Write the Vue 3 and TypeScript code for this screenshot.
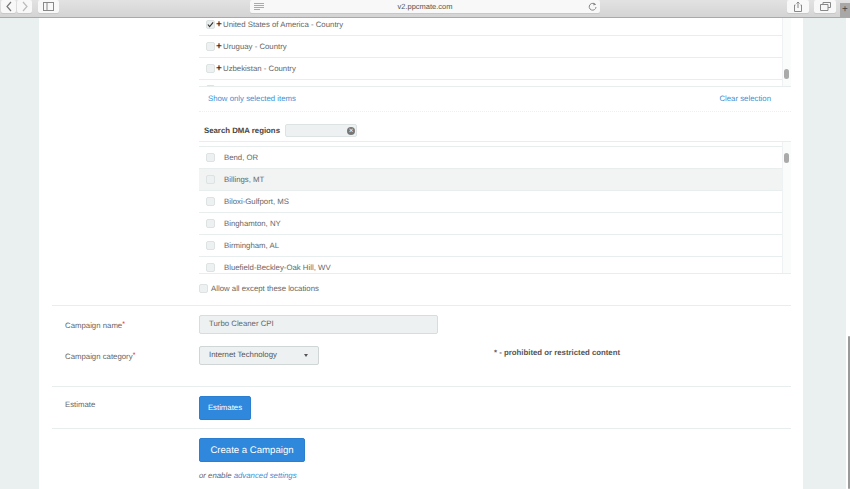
<script setup lang="ts">
const countries = ['United States of America', 'Uruguay', 'Uzbekistan']
const regions = ['Bend, OR', 'Billings, MT', 'Biloxi-Gulfport, MS', 'Binghamton, NY', 'Birmingham, AL', 'Bluefield-Beckley-Oak Hill, WV']
</script>

<template>
  <div class="window">
    <header class="toolbar">
      <div class="btn-pair">
        <button class="tool nav"><svg width="8" height="11" viewBox="0 0 8 11"><path d="M6 1 2 5.500 6 10" fill="none" stroke="#777" stroke-width="1.200"/></svg></button>
        <button class="tool nav"><svg width="8" height="11" viewBox="0 0 8 11"><path d="M2 1 6 5.500 2 10" fill="none" stroke="#bbb" stroke-width="1.200"/></svg></button>
      </div>
      <button class="tool side"><svg width="11" height="9" viewBox="0 0 11 9"><rect x=".5" y=".5" width="10" height="8" fill="none" stroke="#888"/><path d="M4 .5v8" stroke="#888"/></svg></button>
      <div class="address">
        <svg class="reader" width="10" height="7" viewBox="0 0 10 7"><path d="M0 .5h10M0 2.500h10M0 4.500h10M0 6.500h6" stroke="#aaa"/></svg>
        <span class="url">v2.ppcmate.com</span>
        <svg class="reload" width="9" height="9" viewBox="0 0 9 9"><path d="M7.500 3A3.400 3.400 0 1 0 8 5" fill="none" stroke="#888"/><path d="M5.500 .5 8 2.500 5.500 3.500z" fill="#888"/></svg>
      </div>
      <button class="tool action"><svg width="8" height="11" viewBox="0 0 8 11"><path d="M1.500 4H.5v6.500h7V4h-1M4 7V1M2.500 2.500 4 1l1.500 1.500" fill="none" stroke="#888"/></svg></button>
      <button class="tool action"><svg width="11" height="9" viewBox="0 0 11 9"><path d="M3 2.500V.5h7.500v5H8M.5 2.500h7.500v6H.5z" fill="none" stroke="#888"/></svg></button>
      <span class="plus">+</span>
    </header>

    <div class="page">
      <main class="card">
        <section class="geo">
          <div class="list top-list">
            <div class="rows">
              <div v-for="(c, i) in countries" :key="c" class="row">
                <span class="check" :class="{ on: i === 0 }"><svg v-if="i === 0" width="8" height="7" viewBox="0 0 8 7"><path d="M1 3.500 3 6l4-5" fill="none" stroke="#333" stroke-width="1.300"/></svg></span>
                <span class="add">+</span><span>{{ c }} - Country</span>
              </div>
              <div class="row"><span class="check"></span></div>
            </div>
            <div class="track"><span class="thumb thumb-low"></span></div>
          </div>
          <div class="links">
            <a>Show only selected items</a>
            <a>Clear selection</a>
          </div>
          <div class="search">
            <label>Search DMA regions</label>
            <div class="search-box"><span class="clear">×</span></div>
          </div>
          <div class="list dma-list">
            <div class="rows">
              <div class="row spacer"></div>
              <div v-for="(r, i) in regions" :key="r" class="row" :class="{ hover: i === 1 }">
                <span class="check"></span><span class="region">{{ r }}</span>
              </div>
            </div>
            <div class="track"><span class="thumb thumb-high"></span></div>
          </div>
          <div class="allow"><span class="check"></span><span>Allow all except these locations</span></div>
        </section>

        <section class="form-block campaign">
          <div class="field name-field">
            <label>Campaign name<i>*</i></label>
            <div class="input">Turbo Cleaner CPI</div>
          </div>
          <div class="field category-field">
            <label>Campaign category<i>*</i></label>
            <div class="select">Internet Technology<span class="caret"></span></div>
            <strong class="note">* - prohibited or restricted content</strong>
          </div>
        </section>

        <section class="form-block estimate">
          <label>Estimate</label>
          <button class="primary small">Estimates</button>
        </section>

        <section class="form-block create">
          <button class="primary large">Create a Campaign</button>
          <p>or enable <a>advanced settings</a></p>
        </section>
      </main>
      <aside class="page-scroll"><span></span></aside>
    </div>
  </div>
</template>

<style scoped>
.window { width: 850px; height: 489px; overflow: hidden; display: flex; flex-direction: column; background: #eaf0f0; font-family: "Liberation Sans", Arial, sans-serif; font-size: 7.800px; color: #666; text-rendering: geometricPrecision; }
.toolbar { height: 18px; flex: none; display: flex; align-items: flex-start; box-sizing: border-box; padding-left: 1px; background: linear-gradient(#e2e2e2, #d4d4d4); border-bottom: 1px solid #a9a9a9; position: relative; z-index: 1; }
.tool { height: 13px; padding: 0; border: 0; border-radius: 2px; background: #f8f8f8; display: flex; align-items: center; justify-content: center; box-shadow: 0 1px 0 #c8c8c8; }
.btn-pair { display: flex; gap: 1px; }
.nav { width: 15px; }
.side { width: 21px; margin-left: 6px; }
.address { position: relative; width: 350px; height: 13px; margin-left: 191px; margin-right: 187px; background: #f8f8f8; border-radius: 2px; box-shadow: 0 1px 0 #c8c8c8; display: flex; align-items: center; justify-content: center; }
.reader { position: absolute; left: 4px; top: 3px; }
.reload { position: absolute; right: 3px; top: 2px; }
.url { font-size: 7.500px; color: #555; }
.action { width: 22px; margin-right: 5px; }
.plus { margin-left: -1px; margin-top: 3px; width: 10px; height: 14px; background: #a8a8a8; color: #444; font-size: 10px; line-height: 13px; text-align: center; }
.page { flex: 1; display: flex; min-height: 0; padding-left: 39px; }
.card { width: 764px; background: #fff; padding: 0 12px 0 13px; box-sizing: border-box; }
.geo { padding-left: 147px; }
.list { position: relative; border-bottom: 1px solid #e8eeee; overflow: hidden; padding-right: 9px; }
.top-list { height: 68px; }
.top-list .rows { margin-top: -4px; height: 72px; }
.dma-list { height: 131px; border-top: 1px solid #e8eeee; margin-top: 1px; }
.rows { overflow: hidden; height: 100%; }
.row { height: 22px; box-sizing: border-box; border-bottom: 1px solid #e8eeee; display: flex; align-items: center; padding: 0 0 1px 7px; }
.top-list .row:last-child { border-bottom: 0; align-items: flex-start; padding-top: 5px; }
.dma-list .row { padding-bottom: 0; }
.spacer { height: 5px; padding: 0; }
.hover { background: #f2f3f3; }
.check { width: 7px; height: 7px; flex: none; border: 1px solid #dde2e2; border-radius: 2px; background: #edf1f1; margin-right: 1px; display: inline-flex; align-items: center; justify-content: center; }
.check.on { background: #e8eded; }
.add { font-weight: 700; color: #333; font-size: 10px; line-height: 10px; width: 6px; margin-right: 1px; padding-top: 2px; }
.region { margin-left: 8px; }
.track { position: absolute; top: 0; right: 0; bottom: 0; width: 9px; background: #fafbfb; border-left: 1px solid #eef2f2; box-sizing: border-box; }
.thumb { position: absolute; left: 1px; width: 5px; background: #aaa; border-radius: 3px; }
.thumb-low { top: 51px; height: 10px; }
.thumb-high { top: 11px; height: 10px; }
.links { display: flex; justify-content: space-between; padding: 7px 20px 0 9px; height: 17px; border-bottom: 1px dotted #eef0f0; line-height: 10px; }
a { color: #3f8fd2; }
.search { display: flex; align-items: center; height: 19px; margin-top: 9px; padding-left: 5px; }
.search label { font-weight: 700; color: #444; width: 81px; white-space: nowrap; }
.search-box { position: relative; width: 70px; height: 11px; border: 1px solid #dde3e3; border-radius: 2px; background: #edf1f1; }
.clear { position: absolute; right: 1px; top: 1.500px; width: 8px; height: 8px; border-radius: 50%; background: #777; color: #fff; font-size: 8px; line-height: 8px; text-align: center; }
.allow { display: flex; align-items: center; height: 20px; margin-top: 4px; }
.allow .check { margin-right: 3px; }
.form-block { border-top: 1px solid #e8eeee; }
.campaign { height: 81px; margin-top: 7px; box-sizing: border-box; padding-top: 9px; }
.field { display: flex; align-items: center; }
.field label { width: 147px; padding-left: 13px; box-sizing: border-box; padding-top: 1px; }
.field i { color: #e02020; font-style: normal; vertical-align: 2px; font-size: 7px; }
.input { width: 239px; height: 19px; box-sizing: border-box; border: 1px solid #d6dddd; border-radius: 2px; background: #edf1f1; padding-left: 9px; line-height: 16px; }
.category-field { margin-top: 12px; position: relative; }
.select { position: relative; width: 120px; height: 19px; box-sizing: border-box; border: 1px solid #d0d6d6; border-radius: 2px; background: #edf1f1; padding-left: 9px; line-height: 16px; color: #555; }
.caret { position: absolute; right: 10px; top: 7px; border: 2.500px solid transparent; border-top: 3px solid #555; border-bottom: 0; }
.note { margin-left: 175px; color: #555; margin-top: -6px; }
.estimate { height: 42px; display: flex; align-items: center; box-sizing: border-box; }
.estimate label { width: 147px; padding-left: 13px; box-sizing: border-box; margin-top: -6px; }
.primary { display: block; padding: 0; border: 1px solid #2a7fd0; border-radius: 2px; background: #2f88dc; color: #fff; font-family: inherit; text-rendering: geometricPrecision; }
.small { width: 52px; height: 24px; font-size: 7.800px; }
.create { padding: 9px 0 0 147px; }
.large { width: 106px; height: 24px; font-size: 9.600px; }
.create p { margin: 9px 0 0; font-style: italic; line-height: 10px; }
.page-scroll { width: 47px; position: relative; }
.page-scroll::after { content: ""; position: absolute; right: 0; top: 0; bottom: 0; width: 4px; background: #fff; }
.page-scroll span { position: absolute; z-index: 1; right: 0; top: 318px; bottom: 0; width: 2px; background: #9a9a9a; border-radius: 1px; }
</style>
